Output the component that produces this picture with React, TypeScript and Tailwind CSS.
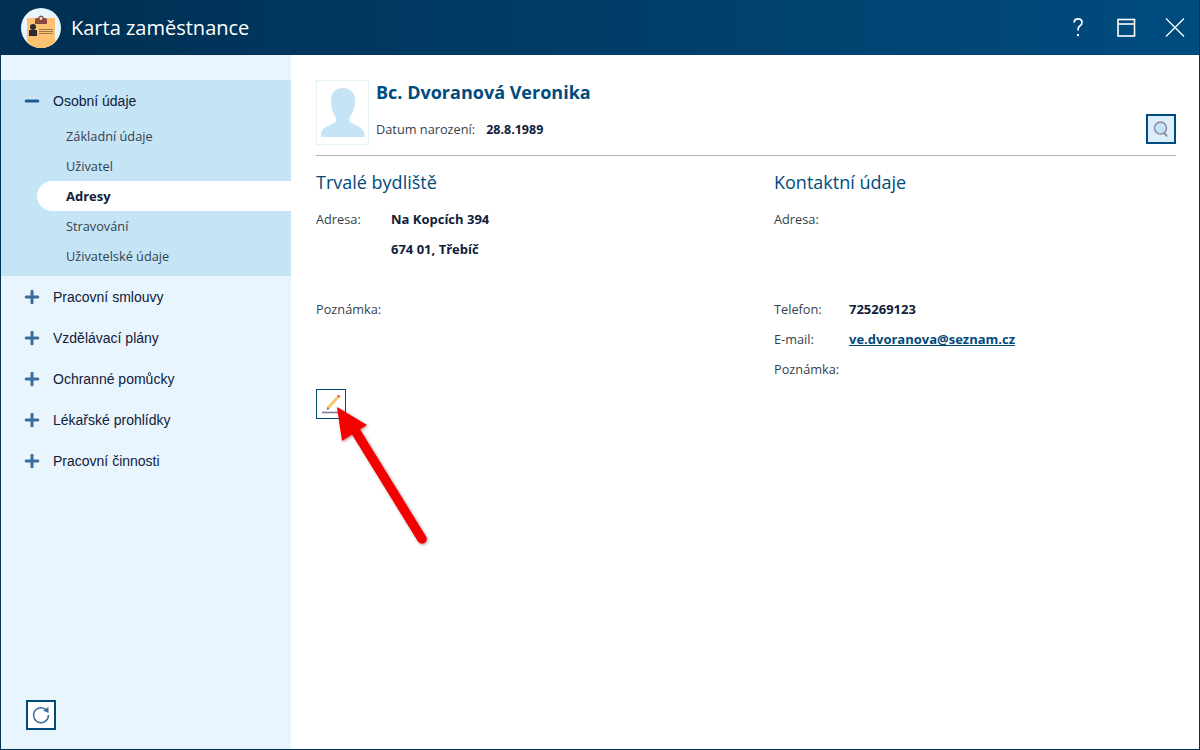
import { Minus, Plus } from 'lucide-react'

const subItems = ['Základní údaje', 'Uživatel', 'Adresy', 'Stravování', 'Uživatelské údaje']
const topItems = ['Pracovní smlouvy', 'Vzdělávací plány', 'Ochranné pomůcky', 'Lékařské prohlídky', 'Pracovní činnosti']

function Field({ label, children, className = '' }: { label: string; children?: React.ReactNode; className?: string }) {
  return (
    <div className={`flex h-[30px] items-center text-[12.75px] text-[#333f4d] ${className}`}>
      <span className="w-[75px] shrink-0">{label}</span>
      {children && <span className="text-[13px] font-bold text-[#10203a]">{children}</span>}
    </div>
  )
}

function CardIcon() {
  return (
    <svg width="40" height="40" viewBox="0 0 40 40">
      <defs>
        <clipPath id="logoClip">
          <circle cx="20" cy="20" r="20" />
        </clipPath>
      </defs>
      <circle cx="20" cy="20" r="20" fill="#e9f5fc" />
      <g clipPath="url(#logoClip)">
        <rect x="6" y="10" width="28" height="30" fill="#fcc271" />
        <path d="M14 16v-4q0-2 2-2h1q1-2.500 3-2.500t3 2.500h1q2 0 2 2v4z" fill="#8a4a3c" />
        <circle cx="20" cy="10.500" r="1.400" fill="#f3e9e0" />
        <circle cx="12" cy="19" r="3" fill="#2b2b33" />
        <rect x="8" y="22" width="8" height="6" fill="#2b2b33" />
        <path d="M18 21.500h14M18 23.500h14M18 25.500h14" stroke="#9c7a4c" strokeWidth="1" />
      </g>
    </svg>
  )
}

export default function App() {
  return (
    <div className="relative flex h-[750px] w-[1200px] flex-col overflow-hidden border-x border-b border-[#003355] bg-white font-['Open_Sans',sans-serif]">
      <header className="-mx-px flex h-[55px] shrink-0 items-center bg-gradient-to-r from-[#002f52] to-[#004c7f] pr-[14px] pl-[21px] text-white">
        <CardIcon />
        <h1 className="ml-[10px] text-[20px] leading-none">Karta zaměstnance</h1>
        <div className="ml-auto flex items-center">
          <svg width="24" height="24" viewBox="0 0 24 24" fill="none" stroke="#fff" strokeWidth="1.700" className="mr-[26px]">
            <path d="M8 6.500Q8.500 2.800 12 2.800Q16 2.800 16 6.500Q16 8.800 13.500 10.300Q12 11.300 12 14.500" />
            <rect x="11" y="18" width="2" height="2.200" fill="#fff" stroke="none" />
          </svg>
          <svg width="20" height="20" viewBox="0 0 20 20" fill="none" stroke="#fff" strokeWidth="1.600" className="mr-[28px]">
            <rect x="2" y="1.500" width="16.500" height="16.500" />
            <path d="M2 6h16.500" />
          </svg>
          <svg width="22" height="22" viewBox="0 0 22 22" fill="none" stroke="#fff" strokeWidth="1.300">
            <path d="M2 1.500l18 18M20 1.500l-18 18" />
          </svg>
        </div>
      </header>

      <div className="flex min-h-0 flex-1">
        <aside className="relative flex w-[290px] shrink-0 flex-col bg-[#e9f5fc] pt-[25px]">
          <div className="bg-[#c5e4f6] pb-[5px]">
            <div className="flex h-[41px] items-center pt-[2px] pl-[22px] font-['Liberation_Sans',sans-serif] text-[14px] text-[#10203a]">
              <Minus size={20} strokeWidth={3.600} className="mr-[11px] -mt-[2px] -ml-px text-[#1f5b90]" />
              Osobní údaje
            </div>
            {subItems.map((item) => (
              <div
                key={item}
                className={`ml-[36px] flex h-[30px] items-center pt-px pl-[29px] text-[12.75px] ${
                  item === 'Adresy' ? 'rounded-l-full bg-white text-[13px] font-bold text-[#10203a]' : 'text-[#333f4d]'
                }`}
              >
                {item}
              </div>
            ))}
          </div>
          {topItems.map((item) => (
            <div key={item} className="flex h-[41px] items-center pt-[2px] pl-[22px] font-['Liberation_Sans',sans-serif] text-[14px] text-[#10203a]">
              <Plus size={20} strokeWidth={3.600} className="mr-[11px] -mt-[2px] -ml-px text-[#3c6c9c]" />
              {item}
            </div>
          ))}
          <button className="mt-auto mb-[19px] ml-[25px] flex h-[30px] w-[30px] items-center justify-center border-2 border-[#004b7d] bg-white">
            <svg width="20" height="20" viewBox="0 0 20 20" fill="none">
              <path d="M14.500 4.200A7.500 7.500 0 1 0 17.500 10" stroke="#3a6f9f" strokeWidth="1.500" />
              <path d="M12 5.500l5.500-3.500v6z" fill="#3a6f9f" />
            </svg>
          </button>
        </aside>

        <main className="min-w-0 flex-1 pt-[25px] pr-[23px] pl-[25px]">
          <div className="flex h-[76px] border-b border-[#b5b5b5]">
            <div className="flex h-[65px] w-[53px] shrink-0 items-center justify-center border border-[#e3f1fa]">
              <svg width="44" height="49" viewBox="0 0 44 49" fill="#c5e4f6">
                <path d="M22 0c8 0 12 5 12 13 0 6-2 12-5.500 16v4c1 3 14 5 15 13v3H0v-3c1-8 14-10 15-13v-4C11.500 25 10 19 10 13 10 5 14 0 22 0z" />
              </svg>
            </div>
            <div className="ml-[7px] flex-1">
              <h2 className="text-[18px] leading-[24px] font-bold text-[#004b7d]">Bc. Dvoranová Veronika</h2>
              <div className="mt-[14px] flex h-[24px] items-center text-[12.75px] text-[#333f4d]">
                <span>Datum narození:</span>
                <span className="ml-[11px] text-[12.500px] font-bold text-[#10203a]">28.8.1989</span>
              </div>
            </div>
            <button className="mt-[34px] flex h-[30px] w-[30px] items-center justify-center border-2 border-[#004b7d] bg-[#dceef9]">
              <svg width="20" height="20" viewBox="0 0 20 20" fill="none">
                <circle cx="9.500" cy="9" r="6" fill="#c5e4f6" stroke="#8a8aa0" strokeWidth="1.500" />
                <path d="M13 13.500l3 4" stroke="#8a8aa0" strokeWidth="2" />
              </svg>
            </button>
          </div>

          <div className="mt-[11px] grid grid-cols-[458px_1fr]">
            <section>
              <h3 className="text-[18px] leading-[30px] text-[#004b7d]">Trvalé bydliště</h3>
              <Field label="Adresa:" className="mt-[8px]">Na Kopcích 394</Field>
              <Field label="">674 01, Třebíč</Field>
              <Field label="Poznámka:" className="mt-[30px]" />
              <button className="mt-[64px] flex h-[30px] w-[30px] items-center justify-center border border-[#004b7d] bg-white">
                <svg width="26" height="26" viewBox="0 0 26 26" fill="none">
                  <path d="M10 17L20 6" stroke="#fcc76a" strokeWidth="3" />
                  <path d="M20 6l1.500-1.500" stroke="#e0605a" strokeWidth="3" />
                  <path d="M8.500 19l1-3 2 2z" fill="#7a7a8a" />
                  <path d="M4 21.500h17" stroke="#8c7f98" strokeWidth="1.700" />
                </svg>
              </button>
            </section>
            <section>
              <h3 className="text-[18px] leading-[30px] text-[#004b7d]">Kontaktní údaje</h3>
              <Field label="Adresa:" className="mt-[8px]" />
              <Field label="Telefon:" className="mt-[60px]">725269123</Field>
              <Field label="E-mail:">
                <span className="text-[#004b7d] underline">ve.dvoranova@seznam.cz</span>
              </Field>
              <Field label="Poznámka:" />
            </section>
          </div>
        </main>
      </div>

      <svg className="pointer-events-none absolute top-[399px] left-[328px]" width="110" height="160" viewBox="0 0 110 160">
        <defs>
          <filter id="arrowShadow" x="-20%" y="-20%" width="140%" height="140%">
            <feDropShadow dx="1" dy="1" stdDeviation="1.500" floodColor="#000" floodOpacity="0.4" />
          </filter>
        </defs>
        <g filter="url(#arrowShadow)">
          <path d="M93 140L24 28" stroke="#f50000" strokeWidth="9.500" strokeLinecap="round" />
          <path d="M8 8L38 26L13 42Z" fill="#f50000" />
        </g>
      </svg>
    </div>
  )
}
